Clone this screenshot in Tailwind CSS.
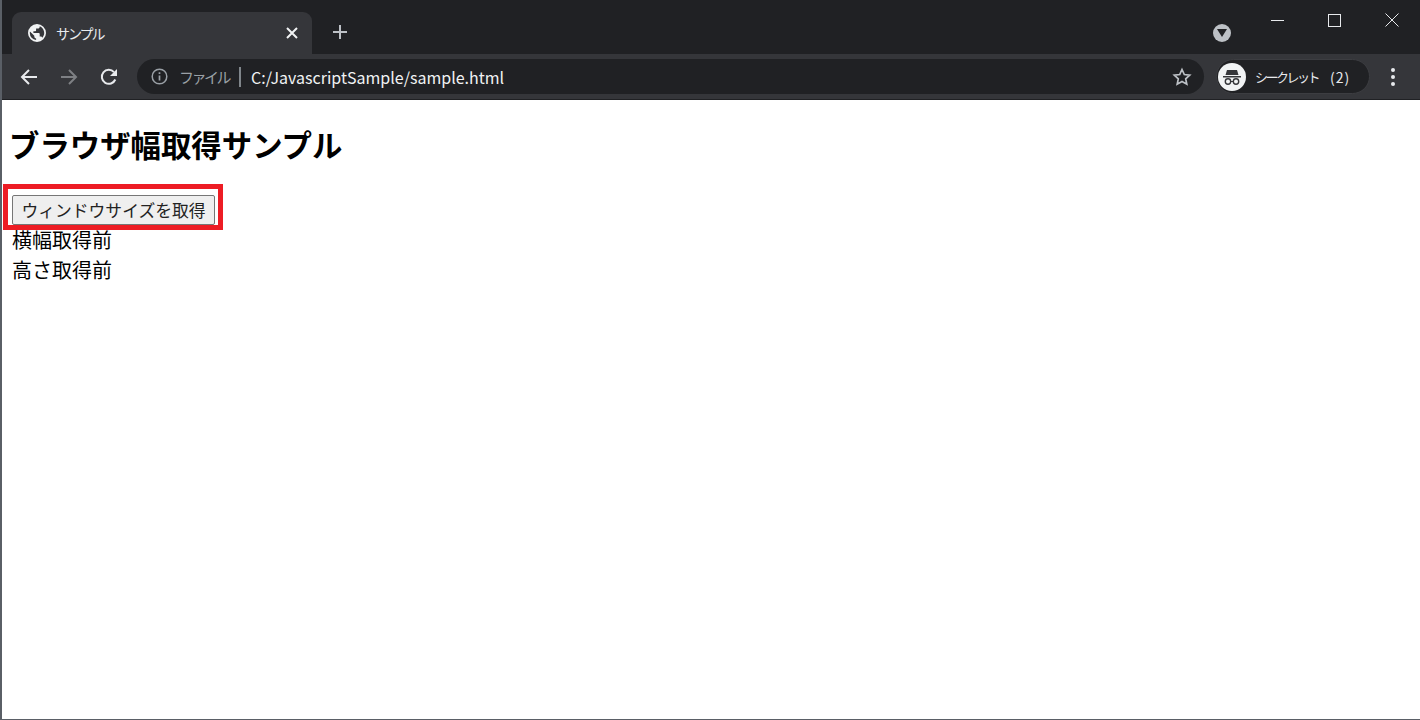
<!DOCTYPE html>
<html lang="ja">
<head>
  <meta charset="UTF-8">
  <title>サンプル</title>
  <script src="https://cdn.jsdelivr.net/npm/@tailwindcss/browser@4"></script>
</head>
<body class="bg-white font-['Noto_Sans_CJK_JP','Noto_Sans',sans-serif] overflow-hidden">
  <div class="relative h-[720px] w-[1420px] flex flex-col border-l-2 border-b border-[#5a5f66]">

    <!-- Tab strip -->
    <header class="h-[54px] bg-[#202124] flex items-end shrink-0 pl-[10px]">
      <div class="w-[300px] h-[42px] bg-[#35363a] rounded-t-[9px] flex items-center pl-[16px] pr-[14px]">
        <svg class="w-[18px] h-[18px] shrink-0" viewBox="2 2 20 20" fill="#f1f3f4">
          <path d="M12 2a10 10 0 1 0 0 20 10 10 0 0 0 0-20zM4 12c0-.6.1-1.200.2-1.800L9 15v1c0 1.100.9 2 2 2v1.900A8 8 0 0 1 4 12zm13.900 5.400c-.3-.8-1-1.400-1.900-1.400h-1v-3c0-.6-.4-1-1-1H8v-2h2c.6 0 1-.4 1-1V7h2c1.100 0 2-.9 2-2v-.4a8 8 0 0 1 2.900 12.800z"/>
        </svg>
        <span class="ml-[10px] text-[14px] tracking-[-2px] text-[#e8eaed] leading-none">サンプル</span>
        <svg class="w-[12px] h-[12px] ml-auto" viewBox="0 0 12 12" stroke="#f1f3f4" stroke-width="2" fill="none">
          <path d="M1 1l10 10M11 1L1 11"/>
        </svg>
      </div>
      <div class="ml-[20px] mb-[14px]">
        <svg class="w-[16px] h-[16px] block" viewBox="0 0 16 16" stroke="#bdc1c6" stroke-width="2" fill="none">
          <path d="M8 1v14M1 8h14"/>
        </svg>
      </div>
      <div class="ml-auto mb-[12px] mr-[189px] w-[18px] h-[18px] rounded-full bg-[#bdc1c6] flex items-center justify-center">
        <svg class="w-[10px] h-[8px]" viewBox="0 0 10 8" fill="#202124"><path d="M0 0h10L5 8z"/></svg>
      </div>
    </header>

    <!-- Window controls -->
    <div class="absolute top-0 right-0 flex items-center h-[40px]">
      <div class="w-[57px] flex justify-center"><div class="w-[13px] h-px bg-[#e8eaed]"></div></div>
      <div class="w-[57px] flex justify-center"><div class="w-[13px] h-[13px] border border-[#e8eaed]"></div></div>
      <div class="w-[57px] flex justify-center">
        <svg class="w-[14px] h-[14px]" viewBox="0 0 14 14" stroke="#e8eaed" fill="none"><path d="M.5.500l13 13M13.500.500l-13 13"/></svg>
      </div>
    </div>

    <!-- Toolbar -->
    <nav class="h-[46px] bg-[#35363a] border-b border-[#202124] flex items-center shrink-0 pl-[17px] pr-[25px]">
      <svg class="w-[20px] h-[20px] shrink-0" viewBox="0 0 20 20" stroke="#e8eaed" stroke-width="2" fill="none">
        <path d="M18 10H3M10 3l-7 7 7 7"/>
      </svg>
      <svg class="w-[20px] h-[20px] shrink-0 ml-[20px]" viewBox="0 0 20 20" stroke="#7e8084" stroke-width="2" fill="none">
        <path d="M2 10h15M10 3l7 7-7 7"/>
      </svg>
      <svg class="w-[20px] h-[20px] shrink-0 ml-[20px]" viewBox="0 0 20 20" fill="none">
        <path d="M16.300 12.500A7 7 0 1 1 15 5.100" stroke="#e8eaed" stroke-width="2"/>
        <path d="M18 2v7h-7z" fill="#e8eaed"/>
      </svg>
      <div class="ml-[18px] w-[1067px] h-[35px] rounded-full bg-[#202124] flex items-center pl-[14px] pr-[12px] text-[16px]">
        <svg class="w-[17px] h-[17px] shrink-0" viewBox="0 0 17 17" fill="none">
          <circle cx="8.500" cy="8.500" r="7.300" stroke="#9aa0a6" stroke-width="1.500"/>
          <path d="M8.500 7.500v5M8.500 4.300v1.700" stroke="#9aa0a6" stroke-width="1.700"/>
        </svg>
        <span class="ml-[11px] text-[15px] tracking-[-2.500px] text-[#9aa0a6] leading-none">ファイル</span>
        <span class="ml-[10px] w-[2px] h-[20px] bg-[#80868b]"></span>
        <span class="ml-[10px] text-[#f1f3f4] leading-none">C:/JavascriptSample/sample.html</span>
        <svg class="w-[20px] h-[20px] ml-auto" viewBox="0 0 20 20" fill="none" stroke="#bdc1c6" stroke-width="1.700">
          <path d="M10 2.500l2.300 5 5.400.6-4 3.700 1.100 5.400-4.800-2.700-4.800 2.700 1.100-5.400-4-3.700 5.400-.6z"/>
        </svg>
      </div>
      <div class="ml-[12px] w-[154px] h-[35px] rounded-full bg-[#202124] border border-[#3c3d41] flex items-center pl-[1px]">
        <div class="w-[28px] h-[28px] rounded-full bg-[#f1f3f4] flex items-center justify-center shrink-0">
          <svg class="w-[22px] h-[22px]" viewBox="0 0 22 22" fill="#35363a">
            <path d="M6 4h10l1.500 5H4.500z"/>
            <path d="M2 10h18v1.500H2z"/>
            <circle cx="7" cy="15.500" r="2.700" fill="none" stroke="#35363a" stroke-width="1.400"/>
            <circle cx="15" cy="15.500" r="2.700" fill="none" stroke="#35363a" stroke-width="1.400"/>
            <path d="M9.500 15h3v1h-3z"/>
          </svg>
        </div>
        <span class="ml-[9px] text-[13px] tracking-[-2.500px] text-[#e8eaed] leading-none whitespace-nowrap">シークレット</span>
        <span class="ml-[12px] text-[14px] tracking-[1px] text-[#e8eaed] leading-none whitespace-nowrap">(2)</span>
      </div>
      <div class="ml-auto flex flex-col gap-[3px]">
        <div class="w-[4px] h-[4px] rounded-full bg-[#e8eaed]"></div>
        <div class="w-[4px] h-[4px] rounded-full bg-[#e8eaed]"></div>
        <div class="w-[4px] h-[4px] rounded-full bg-[#e8eaed]"></div>
      </div>
    </nav>

    <!-- Page -->
    <main class="flex-1 pl-[10px] text-black">
      <h1 class="text-[30.400px] font-bold leading-[44px] pt-[22px] -ml-[3px] whitespace-nowrap">ブラウザ幅取得サンプル</h1>
      <button class="mt-[29px] block w-[203px] h-[30px] bg-[#efefef] border border-[#767676] rounded-[2px] text-[16.800px] leading-none text-[#222] whitespace-nowrap">ウィンドウサイズを取得</button>
      <p class="text-[20px] leading-[30px]">横幅取得前</p>
      <p class="text-[20px] leading-[30px]">高さ取得前</p>
    </main>

    <!-- Red annotation around the button -->
    <div class="absolute left-[1px] top-[184px] w-[220px] h-[46px] border-[5px] border-[#ed1c24]"></div>
  </div>
</body>
</html>
